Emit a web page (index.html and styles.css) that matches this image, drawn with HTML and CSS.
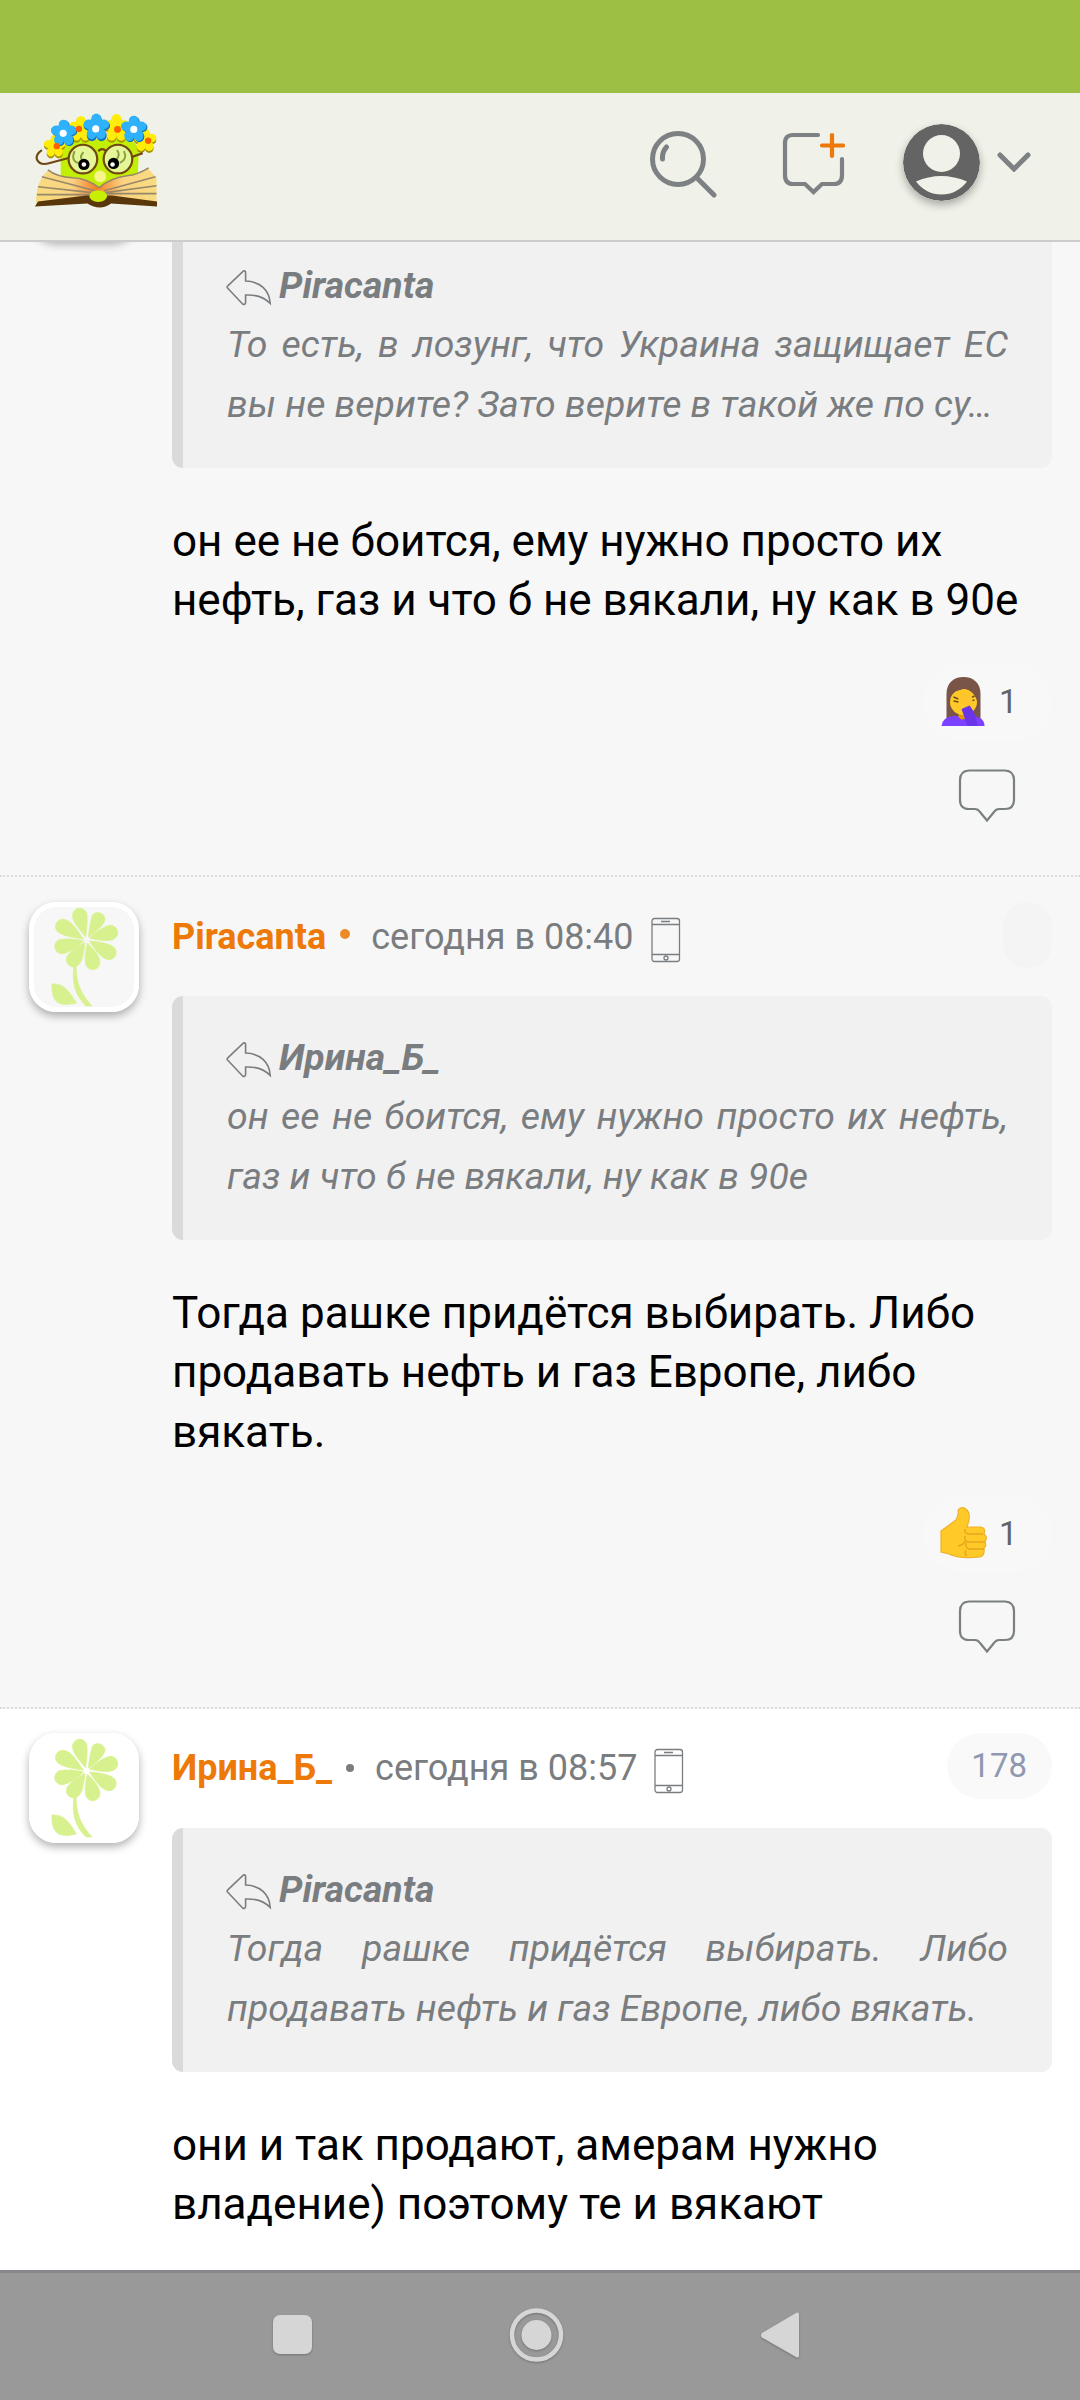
FILE: index.html
```html
<!DOCTYPE html>
<html lang="ru">
<head>
<meta charset="utf-8">
<title>Комментарии</title>
<link rel="stylesheet" href="styles.css">
</head>
<body>
<svg class="defs" width="0" height="0">
  <defs>
    <symbol id="reply" viewBox="0 0 46 36">
      <path d="M1.8 15.8 17 1.3q2.6-1.3 2.6 1.500V11C34 11.500 43.500 20 44.200 33.500 38 27 30 24.500 19.600 25V32.500q-.6 3-3 1.500L2 18.500Q.4 17 1.800 15.800Z"/>
    </symbol>
    <symbol id="phone" viewBox="0 0 30 46">
      <rect x="1" y="1.500" width="27.500" height="43" rx="2.500"/>
      <path d="M1 7.500H28.500M1 37.500H28.500M10 4.500H19"/>
      <circle cx="15" cy="41" r="2"/>
    </symbol>
    <symbol id="bubble" viewBox="0 0 58 54">
      <path d="M11 1.500H47Q56 2 56 11V31Q56 40 47 40H41Q38 40 36 43L29 51.500 22 43Q20 40 17 40H11Q2 40 2 31V11Q2 2 11 1.500Z"/>
    </symbol>
    <symbol id="flower" viewBox="0 0 110 110">
      <path d="M56.500 35C51 28 43.500 20 43.500 13.500A7.200 7.200 0 0 1 58 13.500C58.500 21 57.500 29 56.500 35Z"/>
      <path d="M59.500 35C60 26 62 18 63.500 13A7.200 7.200 0 0 1 76 17.500C75 23 66 31 59.500 35Z"/>
      <path d="M60.500 36C67 30 74 25 80 23.500A7.300 7.300 0 0 1 84 37.500C78 39.500 68 38 60.500 36Z"/>
      <path d="M60.500 39C68 39.500 78 41 83 44A7 7 0 0 1 77 57C71 55 65 46 60.500 39Z"/>
      <path d="M58.500 41C64 47 71 54 71 60.500A7.200 7.200 0 0 1 56.500 60.500C55.500 54 57 47 58.500 41Z"/>
      <path d="M56 40.500C55 48 54 57 51 61A7.200 7.200 0 0 1 37.500 56.500C38 51 49 44 56 40.500Z"/>
      <path d="M54.500 39C48 45 41 50 35 51.500A7.200 7.200 0 0 1 31 37.500C38 36.500 47 37 54.500 39Z"/>
      <path d="M54.500 37C46 36 35 34 30.500 31A7.200 7.200 0 0 1 37 18C44 20 49 30 54.500 37Z"/>
      <path d="M45 63H47C47 80 51 91 63 104H57C45 92 43 80 45 63Z"/>
      <path d="M23 82C36 81 41 91 47.500 101C34 104 22 104 23 82Z"/>
    </symbol>
    <symbol id="bloom" viewBox="-12.500 -12.500 25 25">
      <ellipse cx="0" cy="-7" rx="4.900" ry="5.600"/><ellipse cx="7" cy="-2" rx="5.500" ry="4.700"/><ellipse cx="4.500" cy="7" rx="4.800" ry="5.400"/><ellipse cx="-4.500" cy="7" rx="4.800" ry="5.400"/><ellipse cx="-7" cy="-2" rx="5.500" ry="4.700"/><circle r="5"/>
    </symbol>
  </defs>
</svg>

<div class="statusbar"></div>
<header class="topbar">
  <svg class="logo" width="122" height="98" viewBox="0 0 123.500 98">
    <defs><linearGradient id="page"><stop offset="0" stop-color="#f8dc80"/><stop offset=".3" stop-color="#fad283"/><stop offset=".5" stop-color="#f47e25"/><stop offset=".72" stop-color="#fad283"/><stop offset="1" stop-color="#f8dc80"/></linearGradient></defs>
    <path d="M26 64V34Q30 23 48 26H92Q105 28 105 40L104 64 66 80Z" fill="#c2ef05"/>
    <g fill="#a89600"><use href="#bloom" x="9" y="20" width="22" height="29"/><use href="#bloom" x="34" y="4" width="25" height="26"/><use href="#bloom" x="69" y="2" width="27" height="28"/><use href="#bloom" x="100" y="15" width="23" height="27"/></g>
    <g fill="#ffec09"><use href="#bloom" x="9" y="18" width="22" height="29"/><use href="#bloom" x="34" y="2" width="25" height="26"/><use href="#bloom" x="69" y="0" width="27" height="28"/><use href="#bloom" x="100" y="13" width="23" height="27"/></g>
    <g fill="#1474bb"><use href="#bloom" x="17" y="7" width="26" height="26"/><use href="#bloom" x="49" y="0" width="27" height="29"/><use href="#bloom" x="88" y="3" width="26" height="26"/></g>
    <g fill="#2fb2fb"><use href="#bloom" x="16" y="6" width="26" height="26"/><use href="#bloom" x="49" y="-1" width="26" height="28"/><use href="#bloom" x="87" y="2" width="26" height="26"/></g>
    <g fill="#ff6100"><circle cx="44.500" cy="15.500" r="3.200"/><circle cx="83.500" cy="16" r="3.500"/><circle cx="114.500" cy="27.500" r="3.200"/><circle cx="22" cy="33" r="3.200"/></g>
    <g fill="#fff"><circle cx="28.500" cy="20" r="3.600"/><circle cx="61.500" cy="15.500" r="3.600"/><circle cx="100" cy="16" r="3.600"/></g>
    <g fill="none" stroke="#704611" stroke-width="2.200"><path d="M7 37C-3 43 2 54 15 50L34 45M98 44 109 40M64 38Q68 34 72 38"/><circle cx="48.500" cy="46" r="14.500" fill="#e5f699"/><circle cx="84" cy="46" r="14.500" fill="#e5f699"/></g>
    <path d="M40 38Q36 48 44 50M49 39Q44 45 49 48M83 37Q87 42 82 47M90 38Q94 46 86 50" fill="none" stroke="#8ba042" stroke-width="2"/>
    <circle cx="49.500" cy="51.500" r="5.700"/><circle cx="79.500" cy="50.500" r="5.700"/><circle cx="49.500" cy="51.500" r="2.300" fill="#fff"/><circle cx="78.500" cy="51.500" r="2.300" fill="#fff"/>
    <path d="M1 90Q1 67 14 57 21 63 33 65 52 63 65 75 76 63 98 63 109 59 114 55L123 65V91L65 86Z" fill="url(#page)"/>
    <path d="M13 57Q22 64 38 65 51 65 65 75 77 65 93 63 104 62 115 55M7 64 61 78M3 74 58 80M2 82H58M122 64 70 78M123 73 71 80M123 81H71" fill="none" stroke="#98886a" stroke-width="1.600"/>
    <path d="M0 94 3 89 52 83H78L123.500 89V94L77 91Q66 99 53 91Z" fill="#59370a"/><ellipse cx="64" cy="83.500" rx="9" ry="6" fill="#c7ee05"/><circle cx="66" cy="63.500" r="6" fill="#f8f58b"/>
  </svg>
  <svg class="icon-search" width="68" height="68" viewBox="0 0 68 68"><circle cx="29" cy="29" r="25.500"/><path d="M48 48 65 65M13.500 29Q13 22 17.500 17"/></svg>
  <svg class="icon-new" width="64" height="64" viewBox="0 0 64 64"><path d="M37 4H12Q4 4 4 12V44Q4 53 12 53H24L32.500 61 41 53H53Q61 53 61 44V28"/><path class="plus" d="M51 4V25M41 14.500H62"/></svg>
  <svg class="icon-user" width="77" height="77" viewBox="0 0 77 77"><circle cx="38.500" cy="38.500" r="38.500" fill="#646464"/><circle cx="38.500" cy="29.500" r="18.500" fill="#f0f1e8"/><path d="M13 57.500Q38 46.500 64 57.500Q54 70.500 38.500 70.500T13 57.500Z" fill="#f0f1e8"/></svg>
  <svg class="icon-chevron" width="34" height="20" viewBox="0 0 34 20"><path d="M3 3 17 17 31 3"/></svg>
</header>

<main class="feed">
  <article class="post post-first">
    <div class="avatar"></div>
    <div class="content">
      <div class="meta"></div>
      <blockquote class="quote">
        <div class="author"><svg class="reply"><use href="#reply"/></svg>Piracanta</div>
        <p class="fill">То есть, в лозунг, что Украина защищает ЕС</p>
        <p>вы не верите? Зато верите в такой же по су…</p>
      </blockquote>
      <p class="text">он ее не боится, ему нужно просто их<br>нефть, газ и что б не вякали, ну как в 90е</p>
      <div class="reactions"><span class="pill">
        <svg class="emoji" width="47" height="52" viewBox="1.500 0 47 52"><path d="M8 45V18C8 7 15 1 25 1S42 7 42 18V45Z" fill="#795548"/><path d="M3 50Q4 41 15 40H34Q46 41 46 50Z" fill="#7c40ff"/><path d="M20 36H28V41Q24 46 20 41Z" fill="#e59600"/><ellipse cx="25" cy="26" rx="13.500" ry="13" fill="#ffca28"/><path d="M11 25Q12 15 22 14L26 12Q35 15 39 25L39 16Q34 5 24 6 12 8 11 25Z" fill="#795548"/><path d="M15 21 20 23M15 25 20 26M32 22 36 20M32 25 36 24" stroke="#664e27" stroke-width="1.400"/><path d="M18 20 28 33Q35 31 34 22L30 14 28 19 25 13 25 19 21 14 23 21Z" fill="#fdc52b"/><path d="M23 33 31 29.500Q37 36 39 50H29Z" fill="#6a35e8"/></svg>1</span></div>
      <div class="actions"><svg class="bubble"><use href="#bubble"/></svg></div>
    </div>
  </article>

  <article class="post">
    <div class="avatar"><svg width="110" height="110"><use href="#flower"/></svg></div>
    <div class="content">
      <div class="meta"><b>Piracanta</b><i class="dot online"></i><time>сегодня в 08:40</time><svg class="phone"><use href="#phone"/></svg><span class="count"></span></div>
      <blockquote class="quote">
        <div class="author"><svg class="reply"><use href="#reply"/></svg>Ирина_Б_</div>
        <p class="fill">он ее не боится, ему нужно просто их нефть,</p>
        <p>газ и что б не вякали, ну как в 90е</p>
      </blockquote>
      <p class="text">Тогда рашке придётся выбирать. Либо<br>продавать нефть и газ Европе, либо<br>вякать.</p>
      <div class="reactions"><span class="pill">
        <svg class="emoji" width="47" height="52" viewBox="1 0 47 52"><path d="M2 24 17 13Q20 8 19 3 22-1 27 2 33 7 28 20H42Q47 21 45 27 49 30 46 35 48 38 45 41 46 49 41 50 19 52 10 47L2 45Z" fill="#ffca28" stroke="#edb02b" stroke-width="1.200"/><path d="M44 27H29Q25 26 26 22M46 35H29Q25 34 26 29M45 42H30Q26 41 27 36M28 49Q25 47 27 43M19 39Q25 38 26 34" fill="none" stroke="#e8a51f" stroke-width="1.500"/></svg>1</span></div>
      <div class="actions"><svg class="bubble"><use href="#bubble"/></svg></div>
    </div>
  </article>

  <article class="post post-new">
    <div class="avatar"><svg width="110" height="110"><use href="#flower"/></svg></div>
    <div class="content">
      <div class="meta"><b>Ирина_Б_</b><i class="dot"></i><time>сегодня в 08:57</time><svg class="phone"><use href="#phone"/></svg><span class="count">178</span></div>
      <blockquote class="quote">
        <div class="author"><svg class="reply"><use href="#reply"/></svg>Piracanta</div>
        <p class="fill">Тогда рашке придётся выбирать. Либо</p>
        <p>продавать нефть и газ Европе, либо вякать.</p>
      </blockquote>
      <p class="text">они и так продают, амерам нужно<br>владение) поэтому те и вякают</p>
    </div>
  </article>
</main>

<nav class="navbar">
  <svg width="1080" height="127" viewBox="0 0 1080 127"><rect x="273" y="42" width="39" height="39" rx="7"/><circle class="ring" cx="536.500" cy="62" r="24.500"/><circle cx="536.500" cy="62" r="15"/><path d="M762 60 796 40Q799 38.500 799 42V82.500Q799 85.500 796 84L762 64.500Q760 62 762 60Z"/></svg>
</nav>
</body>
</html>
```

FILE: styles.css
```css
* { box-sizing: border-box; }
body {
  margin: 0;
  height: 2400px;
  display: flex;
  flex-direction: column;
  overflow: hidden;
  background: #fff;
  color: #000;
  font-family: Roboto, "Noto Sans", sans-serif;
  font-size: 44px;
  line-height: 59.4px;
}
p { margin: 0; }
svg { display: block; flex: none; }
.defs { position: absolute; }

.statusbar { flex: none; height: 93px; background: #9dc044; }
.topbar {
  flex: none;
  height: 149px;
  display: flex;
  align-items: flex-start;
  padding-left: 35px;
  background: #f0f1e8;
  border-bottom: 2px solid #ccc;
}
.logo { margin-top: 20px; }
.icon-search, .icon-new, .icon-chevron { fill: none; stroke: #7d8184; stroke-linecap: round; }
.icon-search { margin: 37px 0 0 492px; stroke-width: 5; }
.icon-new { margin: 38px 0 0 64px; stroke-width: 4.200; }
.plus { stroke: #ed7a08; }
.icon-user { margin: 31px 0 0 58px; border-radius: 50%; box-shadow: 0 4px 8px rgba(0, 0, 0, .3); }
.icon-chevron { margin: 59px 0 0 17px; stroke-width: 5; }

.feed { flex: 1; min-height: 0; overflow: hidden; }
.post {
  display: flex;
  gap: 33px;
  padding: 25px 28px 0 29px;
  height: 832px;
  background: #f7f7f7;
  border-bottom: 2px dotted #dcdcdc;
}
.post-first { margin-top: -137px; height: 772px; }
.post-new { background: #fff; border: 0; padding-top: 24px; }
.avatar {
  flex: none;
  width: 110px;
  height: 110px;
  overflow: hidden;
  border-radius: 27px;
  box-shadow: inset 0 0 0 5px #fff, 0 4px 8px rgba(0, 0, 0, .3);
}
.avatar svg { fill: #d8f18f; stroke: #d8f18f; stroke-width: .8; }
.content { flex: 1; min-width: 0; }
.meta {
  display: flex;
  height: 94px;
  color: #7a7d80;
  font-size: 36px;
  line-height: 70px;
}
.post-new .meta { height: 95px; }
.meta b { color: #ed7a08; font-weight: 700; }
.dot { width: 8px; height: 8px; margin: 31px 21px 0 14px; border-radius: 50%; background: #7a7d80; }
.online { width: 10px; height: 10px; margin: 27px 21px 0 14px; background: #ed8a28; }
.phone { width: 30px; height: 46px; margin: 15px 0 0 17px; fill: none; stroke: #7a7d80; stroke-width: 1.300; }
.count {
  height: 66px;
  min-width: 49px;
  margin-left: auto;
  padding: 0 25px 0 24px;
  border-radius: 33px;
  background: #f9f9fa;
  color: #8f98ae;
  font-size: 33px;
  line-height: 66px;
}
.post:not(.post-new) .count { background: #f4f4f4; }
.quote {
  margin: 0;
  height: 244px;
  padding: 32px 44px 0;
  border-left: 11px solid #dadada;
  border-radius: 11px;
  background: #f1f1f1;
  color: #7a7d80;
  font-size: 37.4px;
  font-style: italic;
}
.quote p { white-space: nowrap; }
.author { display: flex; font-weight: 700; }
.reply { width: 46px; height: 36px; margin: 14px 7px 0 -1px; fill: none; stroke: #7a7d80; stroke-width: 1.600; }
.fill { text-align-last: justify; }
.text { margin-top: 44px; white-space: nowrap; }
.reactions { display: flex; justify-content: flex-end; margin-top: 32px; }
.pill {
  display: flex;
  align-items: center;
  gap: 12px;
  width: 129px;
  height: 78px;
  padding-left: 17px;
  border-radius: 39px;
  background: #f8f8f8;
  color: #646464;
  font-size: 33px;
}
.actions { display: flex; justify-content: flex-end; margin-top: 28px; padding-right: 36px; }
.bubble { width: 58px; height: 54px; fill: none; stroke: #7a8080; stroke-width: 2.200; }

.navbar { flex: none; height: 130px; border-top: 3px solid #88878d; background: #99999a; }
.navbar svg { fill: #d6d6d6; filter: drop-shadow(0 1px 1px rgba(0, 0, 0, .25)); }
.navbar .ring { fill: none; stroke: #d6d6d6; stroke-width: 4.500; }
```
